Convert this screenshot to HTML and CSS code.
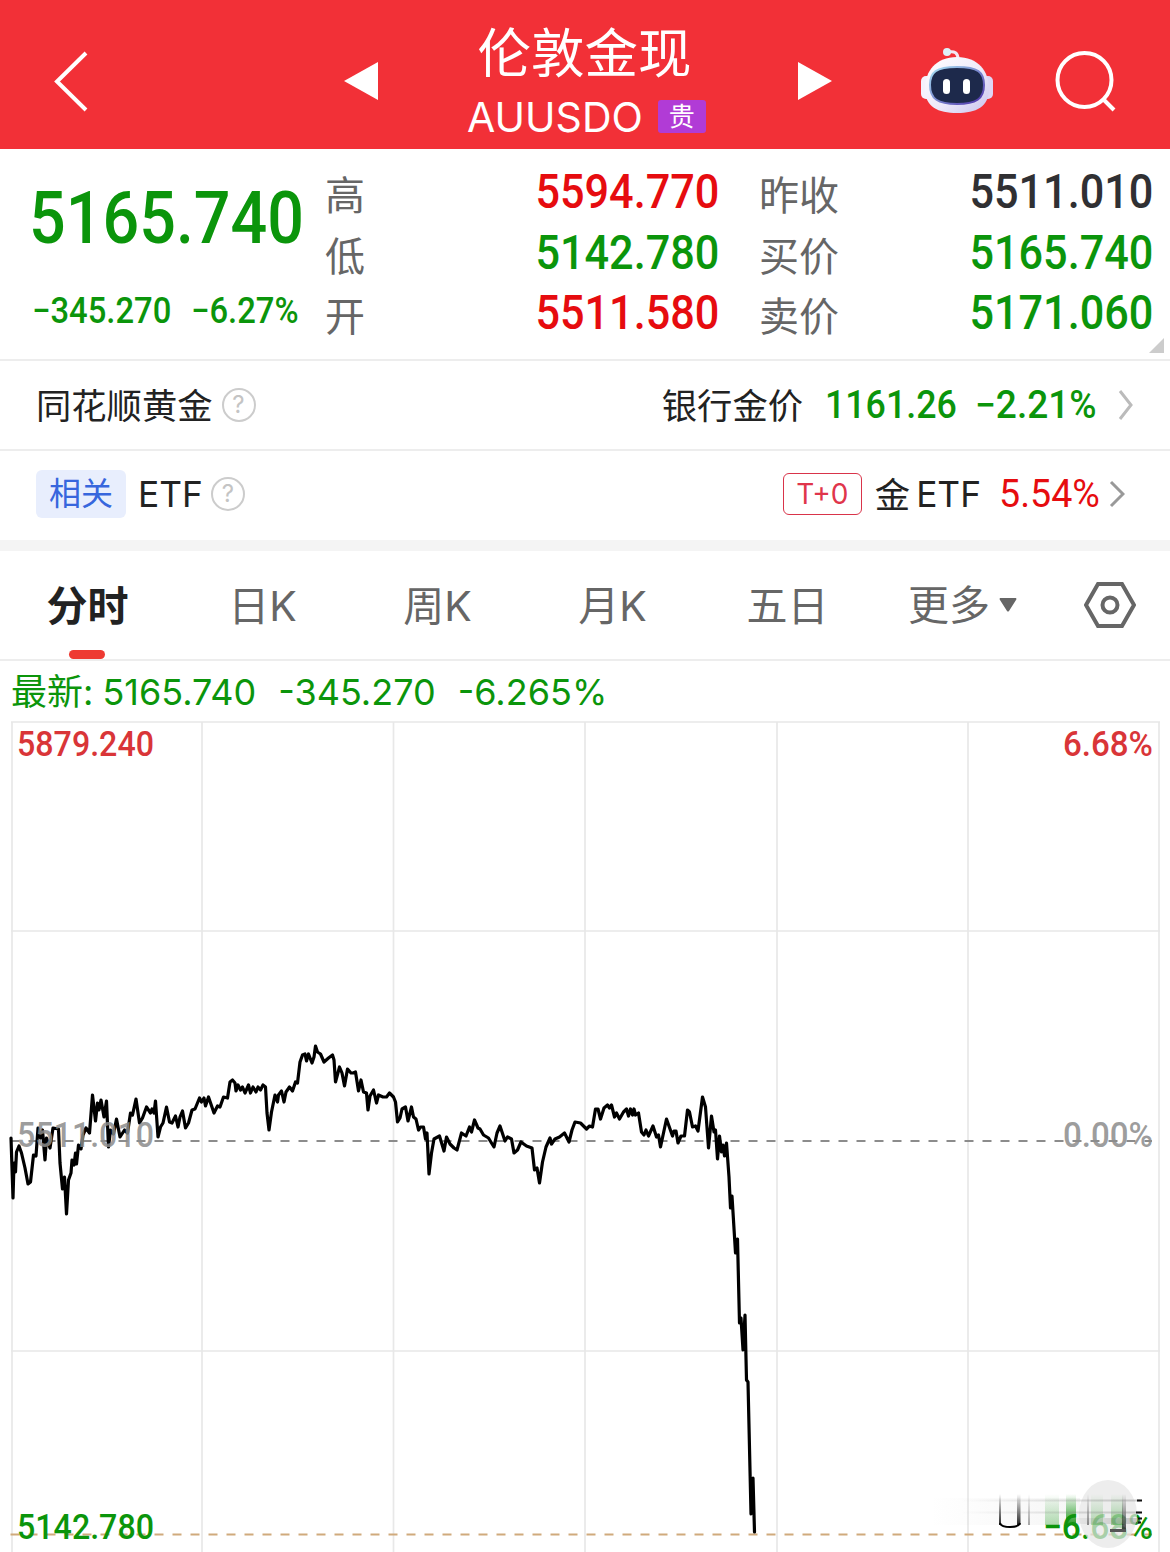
FILE: index.html
```html
<!DOCTYPE html>
<html lang="zh-CN">
  <head>
    <meta charset="utf-8">
    <title>伦敦金现 AUUSDO</title>
    <link rel="stylesheet" href="styles.css">
  </head>

  <body>
    <header class="header">
      <svg class="back" width="38" height="64" viewBox="0 0 38 64"><path d="M34 4 L5 32.500 L34 61" /></svg>
      <svg class="arrow" width="34" height="40" viewBox="0 0 34 40"><path d="M34 1 V39 L0 20 Z" /></svg>
      <div class="title">
        <h1>伦敦金现</h1>
        <div class="code"><span>AUUSDO</span><span class="tag">贵</span></div>
      </div>
      <svg class="arrow" width="34" height="40" viewBox="0 0 34 40"><path d="M0 1 V39 L34 20 Z" /></svg>
      <svg class="robot" width="76" height="70" viewBox="0 0 76 70">
        <defs>
          <linearGradient id="shell" x1="0" y1="0" x2="1" y2="1">
            <stop offset="0" stop-color="#ffffff" />
            <stop offset="0.550" stop-color="#eeeafa" />
            <stop offset="1" stop-color="#c9c3ee" />
          </linearGradient>
          <linearGradient id="rim" x1="0" y1="0" x2="1" y2="1">
            <stop offset="0" stop-color="#a9e4f5" />
            <stop offset="1" stop-color="#4b2da8" />
          </linearGradient>
        </defs>
        <path d="M29 8 Q39 6 39 15" fill="none" stroke="#f3e6f2" stroke-width="3" />
        <circle cx="28" cy="8" r="4" fill="#dff0f8" />
        <rect x="2" y="32" width="12" height="23" rx="5" fill="#f5f1fc" />
        <rect x="62" y="32" width="12" height="23" rx="5" fill="#ded6f4" />
        <path d="M38 13 C59 13 70 27 70 45 C70 63 57 69 38 69 C19 69 6 63 6 45 C6 27 17 13 38 13 Z" fill="url(#shell)" />
        <path d="M38 23 C59 23 65 28 65 41 C65 55 57 60 38 60 C19 60 11 55 11 41 C11 28 17 23 38 23 Z" fill="#1d294b" stroke="url(#rim)" stroke-width="2" />
        <rect x="24" y="35" width="7" height="15" rx="3.500" fill="#fff" />
        <rect x="44" y="35" width="7" height="15" rx="3.500" fill="#fff" />
      </svg>
      <svg class="search" width="62" height="64" viewBox="0 0 62 64"><ellipse cx="29.500" cy="31" rx="27" ry="27" /><path d="M48 50 L59 61" /></svg>
    </header>

    <section class="quote">
      <div class="latest">
        <div class="price num">5165.740</div>
        <div class="change"><span class="num">−345.270</span><span class="num">−6.27%</span></div>
      </div>
      <dl>
        <dt>高</dt><dd class="num red">5594.770</dd>
        <dt>低</dt><dd class="num green">5142.780</dd>
        <dt>开</dt><dd class="num red">5511.580</dd>
      </dl>
      <dl>
        <dt>昨收</dt><dd class="num dark">5511.010</dd>
        <dt>买价</dt><dd class="num green">5165.740</dd>
        <dt>卖价</dt><dd class="num green">5171.060</dd>
      </dl>
      <i class="corner"></i>
    </section>

    <section class="row">
      <span class="name">同花顺黄金</span>
      <span class="help">?</span>
      <span class="name">银行金价</span>
      <span class="num bank-price green">1161.26</span>
      <span class="num bank-change green">−2.21%</span>
      <svg class="chevron light" width="16" height="32" viewBox="0 0 16 32"><path d="M2 2 L13 16 L2 30" /></svg>
    </section>

    <section class="row etf">
      <span class="related">相关</span>
      <span class="latin">ETF</span>
      <span class="help">?</span>
      <span class="t0">T+0</span>
      <span class="name gold">金</span>
      <span class="latin">ETF</span>
      <span class="num etf-change red">5.54%</span>
      <svg class="chevron" width="16" height="28" viewBox="0 0 16 28"><path d="M2 2 L14 14 L2 26" /></svg>
    </section>

    <nav class="tabs">
      <a class="active">分时</a>
      <a>日K</a>
      <a>周K</a>
      <a>月K</a>
      <a>五日</a>
      <a class="more">更多<svg width="18" height="14" viewBox="0 0 18 14"><path d="M1 0 H17 Q18 1 17 2 L10 13 Q9 14 8 13 L1 2 Q0 1 1 0 Z" /></svg></a>
      <svg class="settings" width="52" height="46" viewBox="0 0 52 46"><path d="M14 2 H38 L50 23 L38 44 H14 L2 23 Z" /><circle cx="26" cy="23" r="7.500" /></svg>
    </nav>

    <p class="ticker"><span>最新:</span><span>5165.740</span><span>-345.270</span><span>-6.265%</span></p>

    <svg class="chart" width="1170" height="831" viewBox="0 721 1170 831">
      <defs>
        <linearGradient id="fadeDown" x1="0" y1="0" x2="0" y2="1">
          <stop offset="0" stop-color="#000" stop-opacity="0" />
          <stop offset="1" stop-color="#000" stop-opacity="0.850" />
        </linearGradient>
        <linearGradient id="fadeGreen" x1="0" y1="0" x2="0" y2="1">
          <stop offset="0" stop-color="#0b950b" stop-opacity="0" />
          <stop offset="1" stop-color="#0b950b" stop-opacity="0.900" />
        </linearGradient>
        <linearGradient id="fadeRight" x1="0" y1="0" x2="1" y2="0">
          <stop offset="0" stop-color="#777" stop-opacity="0" />
          <stop offset="1" stop-color="#777" stop-opacity="0.350" />
        </linearGradient>
      </defs>

      <path class="grid" d="M11 722 H1160 M11 931 H1160 M11 1351 H1160 M12 722 V1552 M202 722 V1552 M393.500 722 V1552 M585 722 V1552 M777 722 V1552 M968 722 V1552 M1159 722 V1552" />
      <path class="dash" d="M10.500 1141 H1152" />
      <path class="dash low" d="M10.500 1534.500 H1152" />

      <polyline class="line" points="
        11,1138 13,1198 14,1163 15.500,1172 16.500,1152 19,1146 21.500,1153 25,1168 28,1184 30.500,1182
        33.500,1155 36,1156 38,1128 40.500,1138 42.500,1130 45,1160 46.500,1138 50,1148 53,1128 58.500,1129
        60,1163 62.500,1189 64.500,1177 66.500,1214 68.500,1180 71,1173 72,1160 74,1165 75.500,1153 76.500,1164
        78.500,1145 81,1149 83,1135 86,1128 89.500,1133 92.500,1095 95.500,1121 97.500,1103 99,1110 101,1100
        104,1117 106.500,1101 108.500,1147 110.500,1130 113.500,1134 116.500,1119 120,1137 124.500,1130 127.500,1133
        130.500,1113 132.500,1115 136,1099 139.500,1123 142.500,1118 146.500,1107 150.500,1113 152,1109 154,1113
        155.500,1101 158,1137 160.500,1127 163,1123 166.500,1107 169.500,1122 172,1123 175.500,1116 178,1127 180,1117
        182.500,1111 185.500,1128 188.500,1123 192,1110 195,1109 199.500,1098 201.500,1102 204,1098 205.500,1106
        208.500,1097 214,1113 217.500,1106 220,1107 223.500,1097 227.500,1098 230,1082 232.500,1080 235,1083 236,1091
        238,1085 240.500,1090 242.500,1087 245,1093 248.500,1085 250.500,1093 253,1087 256,1092 258,1087 260.500,1090
        263,1085 265.500,1087 267,1113 269,1130 271.500,1112 275,1095 277.500,1102 278.500,1095 281.500,1091 284,1102
        286,1092 289.500,1087 292.500,1091 295.500,1082 297.500,1083 300,1062 302.500,1055 305,1054 306.500,1061
        308.500,1054 312,1063 314,1057 315.500,1046 317.500,1052 320.500,1054 324,1062 328.500,1058 332.500,1055
        334,1060 335.500,1082 339.500,1067 342,1073 344.500,1086 347.500,1069 351,1073 353,1073 355.500,1072
        358.500,1091 361,1080 363.500,1092 366.500,1093 368,1110 370,1096 373.500,1090 376.500,1103 378.500,1095
        383,1097 386.500,1097 389.500,1093 393.500,1097 395.500,1102 397.500,1122 400,1118 402,1109 405.500,1107
        408,1121 411.500,1107 413.500,1117 416,1119 418.500,1130 420.500,1127 423.500,1127 425.500,1139 427,1133
        429,1174 431.500,1153 434,1139 439.500,1136 444,1151 446.500,1137 450,1144 454,1148 457,1150 461.500,1133
        466,1136 469.500,1127 471.500,1132 474.500,1120 478,1128 480,1129 483.500,1135 488.500,1138 491.500,1143
        494,1147 497,1133 500,1126 505,1141 507.500,1137 511.500,1139 514,1153 517.500,1150 521,1142 526.500,1146
        532,1148 534.500,1170 537,1168 539.500,1183 542.500,1162 546,1147 550,1138 551.500,1144 555,1139 559.500,1137
        564.500,1133 569,1142 572,1130 575,1122 580.500,1123 586.500,1129 589.500,1126 592.500,1127 595.500,1109
        598,1109 600.500,1119 604,1108 607.500,1105 609.500,1108 611.500,1105 614.500,1117 616.500,1113 619.500,1119
        623.500,1112 626.500,1109 628.500,1116 630.500,1109 632.500,1115 634,1109 635.500,1115 638.500,1113
        641.500,1132 644,1135 646,1130 648.500,1136 653,1126 656.500,1137 658.500,1135 660.500,1147 663.500,1133
        666.500,1119 672.500,1136 674,1131 676,1131 678,1143 681,1136 684.500,1136 687.500,1110 689.500,1112
        692.500,1127 695.500,1126 698,1131 702.500,1097 705.500,1107 708.500,1148 711.500,1116 714,1132 715.500,1130
        717.500,1159 719.500,1136 721.500,1152 723,1145 724.500,1156 726.500,1143 729,1177 730.500,1208 732,1196
        735.500,1253 737.500,1239 739.500,1323 741,1318 743,1350 745,1315 746.500,1380 748,1382 751,1514 753,1478
        754.500,1532" />

      <text class="label red-label" x="17" y="755.500" textLength="137" lengthAdjust="spacingAndGlyphs">5879.240</text>
      <text class="label red-label" x="1063" y="755.500" textLength="90" lengthAdjust="spacingAndGlyphs">6.68%</text>
      <text class="label gray-label" x="17" y="1147" textLength="137" lengthAdjust="spacingAndGlyphs">5511.010</text>
      <text class="label gray-label" x="1063" y="1147" textLength="90" lengthAdjust="spacingAndGlyphs">0.00%</text>
      <text class="label green-label" x="17" y="1538.500" textLength="137" lengthAdjust="spacingAndGlyphs">5142.780</text>
      <text class="label green-label" x="1043" y="1538.500" textLength="110" lengthAdjust="spacingAndGlyphs">−6.68%</text>

      <!-- floating button and the smeared edge behind it -->
      <rect x="930" y="1498" width="150" height="27" fill="url(#fadeRight)" opacity="0.200" />
      <rect x="1045" y="1494" width="14" height="31" fill="url(#fadeGreen)" opacity="0.350" />
      <rect x="1066" y="1494" width="10" height="31" fill="url(#fadeGreen)" />
      <ellipse cx="1108" cy="1514" rx="29" ry="34" fill="#e6e6e6" opacity="0.720" />
      <rect x="1091" y="1494" width="12" height="31" fill="url(#fadeGreen)" opacity="0.300" />
      <rect x="1111" y="1494" width="12" height="31" fill="url(#fadeGreen)" opacity="0.400" />
      <rect x="999" y="1494" width="2" height="31" fill="url(#fadeDown)" />
      <rect x="1017" y="1494" width="3.500" height="31" fill="url(#fadeDown)" />
      <rect x="1028" y="1494" width="2" height="31" fill="url(#fadeDown)" opacity="0.400" />
      <rect x="1087" y="1494" width="2" height="31" fill="url(#fadeDown)" opacity="0.500" />
      <path d="M1000 1523 Q1001 1527 1010 1527 Q1019 1527 1020 1523" fill="none" stroke="#000" stroke-width="2" />
      <rect x="1122" y="1494" width="4" height="36" fill="url(#fadeDown)" opacity="0.800" />
      <path d="M1110 1530.500 H1126" stroke="#555" stroke-width="3" />
      <rect x="960" y="1499.500" width="180" height="2" fill="url(#fadeRight)" />
      <rect x="960" y="1511.500" width="180" height="2" fill="url(#fadeRight)" />
      <rect x="1060" y="1518" width="80" height="6" fill="url(#fadeRight)" />
      <path d="M1137 1500.500 H1142 M1136 1512.500 H1142 M1138 1518.500 H1142 M1138 1522.500 H1141" stroke="#111" stroke-width="2" />
    </svg>
  </body>
</html>
```
FILE: styles.css
```css
* {
  box-sizing: border-box;
}

body {
  margin: 0;
  width: 1170px;
  height: 1552px;
  overflow: hidden;
  background-color: #fff;
  color: #222;
  font-family: Inter, "Noto Sans CJK SC", sans-serif;
}

svg {
  display: block;
  flex-shrink: 0;
}

.num {
  font-family: Roboto, sans-serif;
  font-weight: 500;
  white-space: nowrap;
}

.red {
  color: #e60c0f;
}

.green {
  color: #0b950b;
}

.dark {
  color: #303033;
}

/* header */
.header {
  display: grid;
  grid-template-columns: 292px 34px 420px 121px 136px 62px;
  align-items: center;
  height: 149px;
  padding: 13px 0 0 52px;
  background-color: #f23037;
}

.back,
.search {
  fill: none;
  stroke: #fff;
  stroke-width: 4;
}

.arrow {
  fill: #fff;
}

.robot {
  margin-bottom: 4px;
}

.title {
  height: 136px;
  padding-right: 7px;
  text-align: center;
  color: #fff;
}

h1 {
  margin: 0;
  font-family: "Noto Sans CJK SC", sans-serif;
  font-weight: 400;
  font-size: 53.5px;
  line-height: 74px;
}

.code {
  display: flex;
  align-items: center;
  justify-content: center;
  gap: 15px;
  height: 59px;
  padding-left: 4px;
  font-size: 41px;
}

.tag {
  width: 48px;
  height: 33px;
  border-radius: 3px;
  background-color: #b13bd6;
  font-size: 26px;
  line-height: 33px;
}

/* quote panel */
.quote {
  position: relative;
  display: grid;
  grid-template-columns: 253px 394px 394px;
  column-gap: 40px;
  height: 212px;
  padding: 14px 0 0 32px;
  border-bottom: 2px solid #ededed;
}

.latest {
  color: #0b950b;
}

.price {
  width: 302px;
  margin-left: -3px;
  font-size: 73px;
  line-height: 111px;
  transform: scaleX(0.885);
  transform-origin: left;
}

.change {
  display: flex;
  gap: 22px;
  margin-top: 14px;
  font-size: 36px;
  line-height: 46px;
}

.change .num {
  width: 137px;
  transform: scaleX(0.91);
  transform-origin: left;
}

dl {
  display: grid;
  grid-template-columns: 1fr auto;
  grid-template-rows: repeat(3, 60.5px);
  margin: 0;
}

dt {
  color: #666;
  font-size: 40px;
  line-height: 65px;
}

dd {
  margin: 0;
  font-size: 48px;
  line-height: 58px;
  transform: scaleX(0.9);
  transform-origin: right;
}

.corner {
  position: absolute;
  right: 6px;
  bottom: 6px;
  border-left: 15px solid transparent;
  border-bottom: 15px solid #ccc;
}

/* gold and etf rows */
.row {
  display: flex;
  align-items: center;
  height: 90px;
  padding: 0 36px;
  border-bottom: 2px solid #ededed;
  font-size: 35.3px;
}

.name {
  margin-top: -4px;
}

.help {
  width: 34px;
  height: 34px;
  margin: 0 auto 0 9px;
  border: 2.5px solid #ccc;
  border-radius: 50%;
  color: #c4c4c4;
  font-size: 24px;
  line-height: 29px;
  text-align: center;
}

.row .num {
  font-size: 38px;
  transform: scaleX(0.94);
  transform-origin: left;
}

.bank-price {
  width: 130px;
  margin-left: 22px;
}

.row .bank-change {
  width: 121px;
  margin: 0 22px 0 20px;
  transform: scaleX(0.975);
}

.chevron {
  fill: none;
  stroke: #999;
  stroke-width: 3;
}

.chevron.light {
  stroke: #bbb;
}

.etf {
  height: 100px;
  border-bottom: 11px solid #f4f4f4;
  padding: 0 45px 3px 36px;
}

.related {
  width: 90px;
  height: 48px;
  margin-right: 12px;
  border-radius: 6px;
  background-color: #e8eefd;
  color: #3766dd;
  font-size: 32px;
  line-height: 47px;
  text-align: center;
}

.etf .help {
  margin-left: 8px;
}

.t0 {
  width: 79px;
  height: 42px;
  margin-right: 13px;
  border: 1.5px solid #d9344a;
  border-radius: 6px;
  color: #e0354b;
  font-size: 28px;
  line-height: 40px;
  text-align: center;
}

.gold {
  margin-right: 6px;
}

.row .etf-change {
  width: 100px;
  margin: 0 10px 0 18px;
  font-weight: 400;
  transform: scaleX(0.99);
}

/* chart tabs */
.tabs {
  display: grid;
  grid-template-columns: 175px 175px 175px 175px 175px 175px 120px;
  align-items: center;
  height: 110px;
  border-bottom: 2px solid #ededed;
  color: #666;
  font-size: 41px;
  text-align: center;
}

.tabs a {
  position: relative;
  height: 108px;
  line-height: 111px;
}

.tabs .active {
  color: #222;
  font-weight: 700;
}

.active::after {
  content: "";
  position: absolute;
  left: 69px;
  bottom: 0;
  width: 36px;
  height: 9px;
  border-radius: 5px;
  background-color: #ee3a32;
}

.more {
  display: flex;
  align-items: center;
  justify-content: center;
  gap: 9px;
}

.more svg {
  fill: #666;
}

.settings {
  margin-left: 34px;
  fill: none;
  stroke: #666;
  stroke-width: 4;
}

/* line above the chart */
.ticker {
  display: flex;
  gap: 22px;
  height: 60px;
  margin: 0;
  padding-left: 11px;
  color: #0b950b;
  font-size: 36px;
  line-height: 62px;
}

.ticker span:first-child {
  margin-right: -13px;
}

.grid {
  fill: none;
  stroke: #e8e8e8;
  stroke-width: 1.7;
}

.dash {
  fill: none;
  stroke: #8c8c8c;
  stroke-width: 2;
  stroke-dasharray: 9 9;
}

.dash.low {
  stroke: #d0aa7c;
}

.line {
  fill: none;
  stroke: #000;
  stroke-width: 3.2;
  stroke-linejoin: round;
  stroke-linecap: round;
}

.label {
  font-family: Roboto, sans-serif;
  font-weight: 500;
  font-size: 35.5px;
}

.red-label {
  fill: #d93538;
}

.gray-label {
  fill: #8c8c8c;
  fill-opacity: 0.85;
}

.green-label {
  fill: #0b950b;
}
```
